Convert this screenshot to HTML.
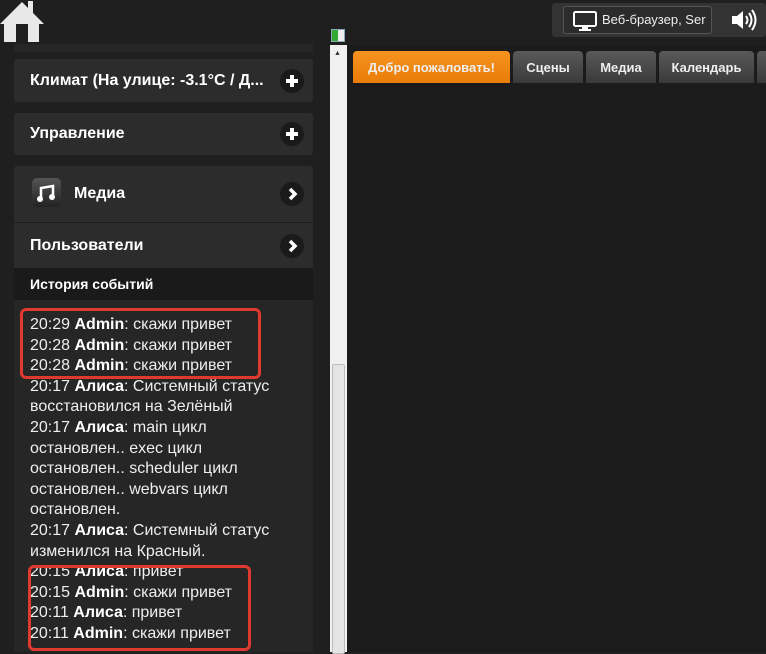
<!DOCTYPE html>
<html><head><meta charset="utf-8"><style>
*{margin:0;padding:0;box-sizing:border-box}
body{width:766px;height:652px;overflow:hidden;background:#1f1f1f;font-family:"Liberation Sans",Arial,sans-serif;position:relative;color:#fff}
.a{position:absolute}
.panel{position:absolute;left:14px;width:299px;background:#2c2c2c;border-radius:3px;font-weight:bold;font-size:16px;padding-left:16px;display:flex;align-items:center}
.circ{position:absolute;right:9px;top:50%;margin-top:-12px;width:24px;height:24px;border-radius:50%;background:#1a1a1a}
.log{position:absolute;left:30px;top:315px;width:250px;font-size:16px;line-height:20.6px;color:#eee}
.log b{color:#fff}
.tab{position:absolute;top:51px;height:32px;background:linear-gradient(#5a5a5a,#3a3a3a);border-radius:4px 4px 0 0;font-size:13px;font-weight:bold;color:#eee;text-align:center;line-height:34px}
.box{position:absolute;border:3px solid #e03a30;border-radius:6px}
</style></head><body>
<svg class="a" style="left:0;top:0" width="46" height="42" viewBox="0 0 46 42"><path d="M0 24 L22 2 L28 8 V1 H33 V13 L44 24 H39 V42 H28 V24 H16 V42 H4 V24 Z" fill="#e8e8e8"/></svg>
<div class="a" style="left:14px;top:44px;width:299px;height:8px;background:#262626"></div>
<div class="panel" style="top:59px;height:43px">Климат (На улице: -3.1°C / Д...<span class="circ"><svg width="24" height="24"><path d="M12 6V18M6 12H18" stroke="#fff" stroke-width="4"/></svg></span></div>
<div class="panel" style="top:113px;height:42px">Управление<span class="circ"><svg width="24" height="24"><path d="M12 6V18M6 12H18" stroke="#fff" stroke-width="4"/></svg></span></div>
<div class="panel" style="top:166px;height:56px;padding-left:60px;border-radius:3px 3px 0 0">Медиа<span class="circ"><svg width="24" height="24"><path d="M10 7L15 12L10 17" fill="none" stroke="#fff" stroke-width="3.5"/></svg></span>
<div class="a" style="left:18px;top:12px;width:29px;height:29px;border-radius:5px;background:linear-gradient(#555,#222)"><svg width="29" height="29"><path d="M9 21V10L21 8V19" fill="none" stroke="#fff" stroke-width="2.5"/><circle cx="8" cy="21" r="3" fill="#fff"/><circle cx="20" cy="19" r="3" fill="#fff"/></svg></div></div>
<div class="panel" style="top:222px;height:46px;border-top:1px solid #1e1e1e;border-radius:0">Пользователи<span class="circ"><svg width="24" height="24"><path d="M10 7L15 12L10 17" fill="none" stroke="#fff" stroke-width="3.5"/></svg></span></div>
<div class="panel" style="top:268px;height:32px;background:#1a1a1a;font-size:14px;border-radius:0">История событий</div>
<div class="a" style="left:14px;top:300px;width:299px;height:352px;background:#262626"></div>
<div class="log">20:29 <b>Admin</b>: скажи привет<br>20:28 <b>Admin</b>: скажи привет<br>20:28 <b>Admin</b>: скажи привет<br>20:17 <b>Алиса</b>: Системный статус восстановился на Зелёный<br>20:17 <b>Алиса</b>: main цикл остановлен.. exec цикл остановлен.. scheduler цикл остановлен.. webvars цикл остановлен.<br>20:17 <b>Алиса</b>: Системный статус изменился на Красный.<br>20:15 <b>Алиса</b>: привет<br>20:15 <b>Admin</b>: скажи привет<br>20:11 <b>Алиса</b>: привет<br>20:11 <b>Admin</b>: скажи привет</div>
<div class="box" style="left:20px;top:308px;width:241px;height:71px"></div>
<div class="box" style="left:28px;top:565px;width:223px;height:86px"></div>
<div class="a" style="left:331px;top:29px;width:14px;height:13px;background:#eee;border:1px solid #8ab"><div style="width:6px;height:11px;background:#3a3"></div></div>
<div class="a" style="left:330px;top:45px;width:17px;height:607px;background:#f0f0f0"></div>
<div class="a" style="left:332px;top:364px;width:13px;height:290px;background:#e4e4e4;border:1px solid #bbb;border-radius:2px"></div>
<div class="a" style="left:334px;top:50px;font-size:7px;color:#333">▲</div>
<div class="a" style="left:347px;top:45px;width:419px;height:607px;background:#1b1b1b"></div>
<div class="tab" style="left:353px;width:157px;background:linear-gradient(#f7921e,#e97d0a)">Добро пожаловать!</div>
<div class="tab" style="left:513px;width:70px">Сцены</div>
<div class="tab" style="left:586px;width:70px">Медиа</div>
<div class="tab" style="left:659px;width:95px">Календарь</div>
<div class="tab" style="left:757px;width:20px"></div>
<div class="a" style="left:552px;top:3px;width:214px;height:34px;background:#333;border-radius:3px"></div>
<div class="a" style="left:563px;top:6px;width:149px;height:28px;border:1px solid #555;border-radius:3px;background:#2c2c2c;font-size:13px;line-height:26px;padding-left:38px;color:#eee">Веб-браузер, Ser</div>
<svg class="a" style="left:573px;top:11px" width="24" height="20" viewBox="0 0 24 20"><rect x="1" y="1" width="22" height="14" rx="1.5" fill="none" stroke="#fff" stroke-width="2"/><rect x="9" y="15" width="6" height="3" fill="#fff"/><rect x="6" y="18" width="12" height="2" fill="#fff"/></svg>
<svg class="a" style="left:731px;top:9px" width="26" height="22" viewBox="0 0 26 22"><path d="M1 7 H6 L12 2 V20 L6 15 H1 Z" fill="#fff"/><path d="M15 7 Q18 11 15 15 M18 4 Q23 11 18 18 M21 1 Q28 11 21 21" fill="none" stroke="#fff" stroke-width="2"/></svg>
</body></html>
